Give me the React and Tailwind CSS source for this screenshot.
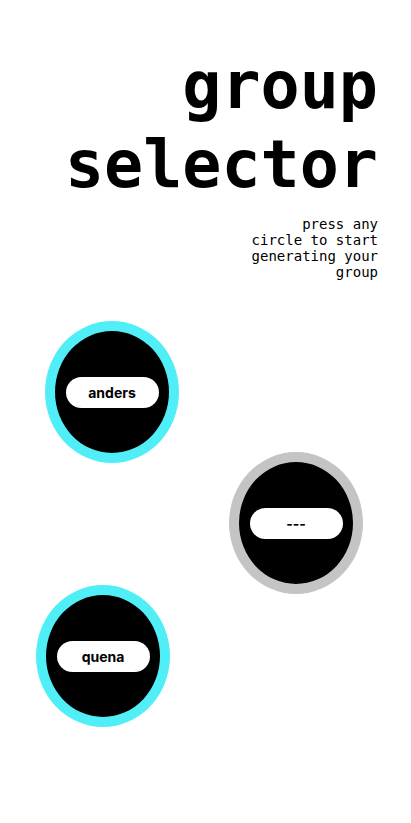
import React, { useState } from 'react';

const groups = [
  { name: 'anders', active: true, offset: 'ml-[45px] mt-[41px]' },
  { name: '---', active: false, offset: 'ml-[229px] -mt-[11px]' },
  { name: 'quena', active: true, offset: 'ml-[36px] -mt-[9px]' },
];

function GroupCircle({ name, active, offset, onPress }) {
  return (
    <button
      onClick={onPress}
      className={`${offset} w-[134px] h-[142px] rounded-[50%] border-[10px] bg-black flex items-center justify-center cursor-pointer ${
        active ? 'border-[#50eff8]' : 'border-[#c4c4c4]'
      }`}
    >
      <span className="w-[93px] h-[31px] rounded-full bg-white flex items-center justify-center text-[14px] font-bold text-black font-['Inter',sans-serif]">
        {name}
      </span>
    </button>
  );
}

export default function App() {
  const [selected, setSelected] = useState(null);

  return (
    <div className="min-h-screen bg-white flex flex-col pb-10">
      {/* Header */}
      <div className="flex flex-col items-end pr-[33px] pt-[46px] font-['DejaVu_Sans_Mono',monospace] text-black">
        <h1 className="text-[65px] leading-[79px] font-bold text-right">
          group
          <br />
          selector
        </h1>
        <p className="mt-[12px] w-[130px] text-[14px] leading-[16px] text-right">
          press any circle to start generating your group
        </p>
      </div>

      {/* Circles */}
      {groups.map((g, i) => (
        <GroupCircle key={i} {...g} onPress={() => setSelected(i)} />
      ))}
      {selected !== null && <span className="sr-only">{groups[selected].name}</span>}
    </div>
  );
}
